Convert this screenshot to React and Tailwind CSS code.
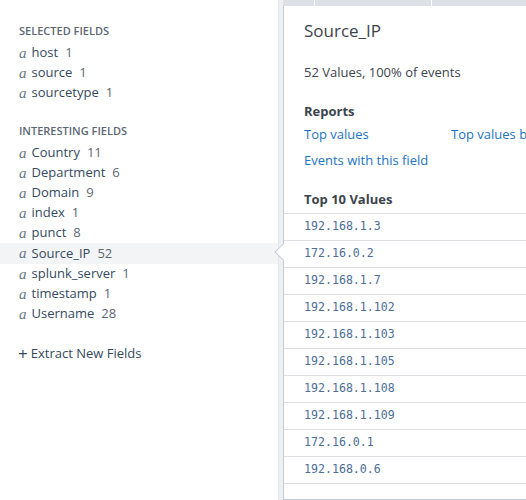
const selected = [
  ['host', 1],
  ['source', 1],
  ['sourcetype', 1],
]

const interesting = [
  ['Country', 11],
  ['Department', 6],
  ['Domain', 9],
  ['index', 1],
  ['punct', 8],
  ['Source_IP', 52],
  ['splunk_server', 1],
  ['timestamp', 1],
  ['Username', 28],
]

const values = [
  '192.168.1.3',
  '172.16.0.2',
  '192.168.1.7',
  '192.168.1.102',
  '192.168.1.103',
  '192.168.1.105',
  '192.168.1.108',
  '192.168.1.109',
  '172.16.0.1',
  '192.168.0.6',
]

function FieldRow({ name, count, active }) {
  return (
    <div className={`flex items-center h-5 pl-[19px] ${active ? 'bg-[#f2f4f5] h-[21px]' : ''}`}>
      <span className="font-['Liberation_Serif',serif] italic text-[15px] text-[#6b7785] mr-[5px] leading-none">a</span>
      <span className="text-[#34495e]">{name}</span>
      <span className="ml-[7px] text-[#5c6773]">{count}</span>
    </div>
  )
}

export default function App() {
  return (
    <div className="flex w-[526px] h-[500px] overflow-hidden bg-white font-['Open_Sans',sans-serif] text-[13px]">
      <div className="w-[279px] shrink-0 border-r border-[#e1e6eb] pt-[23px]">
        <div className="pl-[19px] text-[11px] font-semibold text-[#5c6773] h-[16px] leading-[16px] mb-[4px]">SELECTED FIELDS</div>
        {selected.map(([n, c]) => <FieldRow key={n} name={n} count={c} />)}
        <div className="pl-[19px] text-[11px] font-semibold text-[#5c6773] h-[16px] leading-[16px] mt-[20px] mb-[4px]">INTERESTING FIELDS</div>
        {interesting.map(([n, c]) => <FieldRow key={n} name={n} count={c} active={n === 'Source_IP'} />)}
        <div className="pl-[18px] mt-[20px] flex items-center text-[#34495e]">
          <span className="text-[17px] leading-none mr-[3px]">+</span>Extract New Fields
        </div>
      </div>
      <div className="w-[4px] shrink-0 bg-[#eef0f2]" />
      <div className="flex-1 flex flex-col">
        <div className="h-[6px] flex bg-[#dde1e6]">
          <div className="w-[32px] border-r border-white" />
          <div className="w-[117px] border-r border-white" />
        </div>
        <div className="relative w-[260px] h-[494px] border-l border-b border-[#c3cbd4] bg-white">
          <div className="absolute left-[-7px] top-[240px] w-[12px] h-[12px] rotate-45 bg-white border-l border-b border-[#c3cbd4]" />
          <div className="pl-[20px] pt-[11px]">
            <div className="text-[17px] text-[#3c444d] h-[28px] leading-[28px]">Source_IP</div>
            <div className="mt-[18px] text-[#3c444d]">52 Values, 100% of events</div>
            <div className="mt-[19px] font-bold text-[#3c444d]">Reports</div>
            <div className="mt-[4px] flex text-[#1d74c2]">
              <span className="w-[147px] shrink-0">Top values</span>
              <span className="whitespace-nowrap">Top values by time</span>
            </div>
            <div className="mt-[6px] text-[#1d74c2]">Events with this field</div>
            <div className="mt-[21px] font-bold text-[#3c444d] h-[16px] leading-[16px]">Top 10 Values</div>
          </div>
          <div className="mt-[6px] border-t border-[#dde1e6]">
            {values.map(v => (
              <div key={v} className="h-[27px] border-b border-[#dde1e6] pl-[20px] flex items-center font-['DejaVu_Sans_Mono',monospace] text-[11.6px] text-[#4d6d96]">
                {v}
              </div>
            ))}
          </div>
        </div>
      </div>
    </div>
  )
}
